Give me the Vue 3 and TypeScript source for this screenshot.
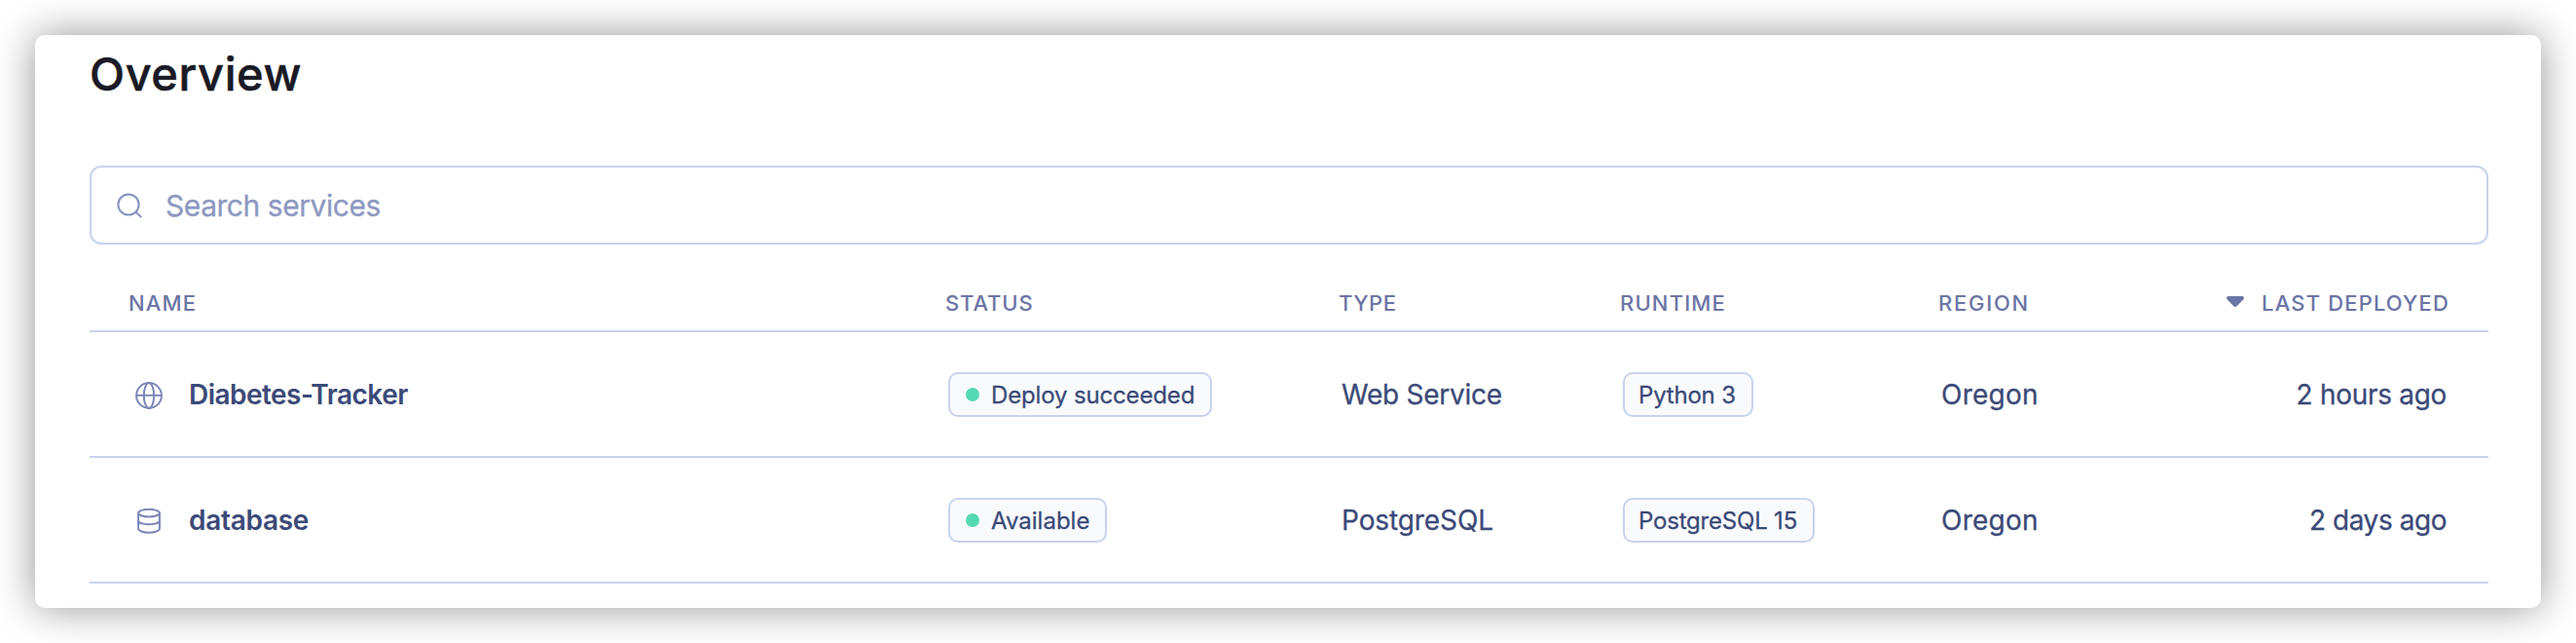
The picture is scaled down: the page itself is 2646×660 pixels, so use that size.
<script setup lang="ts">
interface Service {
  key: string
  icon: 'globe' | 'database'
  name: string
  status: string
  type: string
  runtime: string
  region: string
  deployed: string
}

const services: Service[] = [
  { key: 'web', icon: 'globe', name: 'Diabetes-Tracker', status: 'Deploy succeeded', type: 'Web Service', runtime: 'Python 3', region: 'Oregon', deployed: '2 hours ago' },
  { key: 'db', icon: 'database', name: 'database', status: 'Available', type: 'PostgreSQL', runtime: 'PostgreSQL 15', region: 'Oregon', deployed: '2 days ago' },
]
</script>

<template>
  <main class="card">
    <h1 class="title"><span>Overview</span></h1>
    <div class="search">
      <svg class="search-icon" width="28" height="28" viewBox="0 0 28 28" fill="none" stroke="currentColor" stroke-width="2">
        <circle cx="13" cy="13" r="10.6" />
        <path d="M20.5 20.5 L26.3 26.1" />
      </svg>
      <span class="placeholder">Search services</span>
    </div>
    <div class="row head">
      <div class="h-name"><span>Name</span></div>
      <div class="h-status"><span>Status</span></div>
      <div class="h-type"><span>Type</span></div>
      <div class="h-runtime"><span>Runtime</span></div>
      <div class="h-region"><span>Region</span></div>
      <div class="c-last">
        <svg class="sort" width="18" height="11" viewBox="0 0 18 11" fill="currentColor">
          <path d="M2 0H16Q18 0 18 1.8Q18 2.8 17 3.8L10.6 10.2Q9 11.6 7.4 10.2L1 3.8Q0 2.8 0 1.8Q0 0 2 0Z" />
        </svg>
        <span>Last deployed</span>
      </div>
    </div>
    <div v-for="s in services" :key="s.key" class="row item" :class="s.key">
      <div class="c-name">
        <svg v-if="s.icon === 'globe'" class="icon" width="28" height="28" viewBox="0 0 28 28" fill="none" stroke="currentColor" stroke-width="2">
          <circle cx="14" cy="14" r="12.9" />
          <ellipse cx="14" cy="14" rx="5.2" ry="12.9" />
          <path d="M1 13.8H27" />
        </svg>
        <svg v-else class="icon" width="28" height="28" viewBox="0 0 28 28" fill="none" stroke="currentColor" stroke-width="2">
          <ellipse cx="14" cy="5.6" rx="10.9" ry="3.8" />
          <path d="M3.1 5.6V21.6C3.1 24 8 25.7 14 25.7S24.9 24 24.9 21.6V5.6" />
          <path d="M3.1 13.6C3.1 15.8 8 17.2 14 17.2S24.9 15.8 24.9 13.6" />
        </svg>
        <span class="name">{{ s.name }}</span>
      </div>
      <div class="c-badge">
        <span class="badge status"><i class="dot"></i><span class="label">{{ s.status }}</span></span>
      </div>
      <div class="c-text type"><span>{{ s.type }}</span></div>
      <div class="c-badge">
        <span class="badge runtime"><span class="label">{{ s.runtime }}</span></span>
      </div>
      <div class="c-text region"><span>{{ s.region }}</span></div>
      <div class="c-last deployed"><span>{{ s.deployed }}</span></div>
    </div>
  </main>
</template>

<style>
body {
  background: #fff;
  overflow: hidden;
}
</style>

<style scoped>
.card {
  box-sizing: border-box;
  width: 2574px;
  height: 588px;
  margin: 36px;
  padding: 0 54px 0 56px;
  border-radius: 10px;
  background: #fff;
  box-shadow: 0 0 42px rgba(0, 0, 0, 0.42);
  font-family: Inter, "Liberation Sans", sans-serif;
  color: #3b4a78;
  display: flow-root;
  white-space: nowrap;
}
.title {
  margin: 12px 0 0;
  height: 122px;
  line-height: 56px;
  font-size: 47px;
  font-weight: 500;
  letter-spacing: 0.6px;
  color: #1a1a25;
  -webkit-text-stroke: 0.5px #1a1a25;
}
.search {
  box-sizing: border-box;
  height: 81px;
  border: 2px solid #c7d3ee;
  border-radius: 12px;
  display: flex;
  align-items: center;
  padding-left: 25px;
}
.search-icon {
  color: #8592bd;
  margin-right: 23px;
}
.placeholder {
  font-size: 30px;
  letter-spacing: -0.45px;
  color: #8d99c0;
  -webkit-text-stroke: 0.3px #8d99c0;
}
.row {
  box-sizing: border-box;
  display: grid;
  grid-template-columns: 879px 404px 289px 327px 160px 1fr;
  align-items: center;
  border-bottom: 2px solid #c7d3ee;
}
.head {
  height: 90px;
  padding-top: 31px;
  font-size: 22px;
  font-weight: 500;
  letter-spacing: 1.15px;
  text-transform: uppercase;
  color: #6b75a5;
}
.h-name { padding-left: 40px; }
.h-status { letter-spacing: 0.9px; }
.h-type { letter-spacing: 0.5px; }
.h-region { letter-spacing: 1.75px; }
.c-last {
  display: flex;
  align-items: center;
  justify-content: flex-end;
  padding-right: 43px;
}
.head .c-last {
  padding-right: 40px;
}
.sort {
  margin: 0 18px 2px 0;
}
.item {
  height: 129px;
  font-size: 28px;
  -webkit-text-stroke: 0.3px #3b4a78;
}
.c-name {
  display: flex;
  align-items: center;
  padding-left: 47px;
}
.icon {
  color: #7d87b8;
  margin: 3px 27px 0 0;
}
.name {
  font-weight: 600;
  -webkit-text-stroke: 0;
}
.badge {
  box-sizing: border-box;
  height: 46px;
  border: 2px solid #c7d3ee;
  border-radius: 10px;
  background: #f9fafc;
  display: flex;
  align-items: center;
  font-size: 24px;
}
.label {
  padding-top: 2px;
}
.status {
  padding-left: 16px;
}
.dot {
  width: 14px;
  height: 14px;
  border-radius: 50%;
  background: #55d9b3;
  margin-right: 12px;
}
.runtime {
  padding-left: 14px;
}
.c-badge,
.c-text {
  padding-left: 3px;
}
.region { letter-spacing: 0.25px; }

.web .name { letter-spacing: -0.53px; }
.web .status { width: 271px; letter-spacing: -0.15px; }
.web .type { letter-spacing: -0.25px; }
.web .runtime { width: 134px; letter-spacing: -0.2px; }
.web .deployed { letter-spacing: -0.3px; }

.db .name { letter-spacing: -0.3px; }
.db .status { width: 163px; }
.db .type { letter-spacing: -0.1px; }
.db .runtime { width: 197px; letter-spacing: -0.2px; }
.db .deployed { letter-spacing: -0.45px; }
</style>
